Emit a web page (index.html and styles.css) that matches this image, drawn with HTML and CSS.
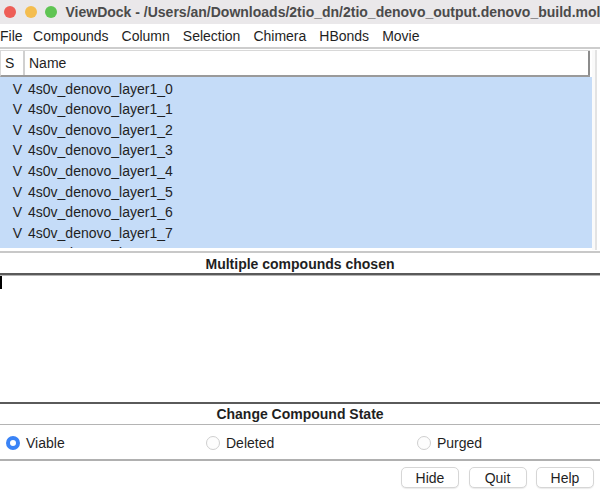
FILE: index.html
```html
<!DOCTYPE html>
<html lang="en">
<head>
  <meta charset="UTF-8" />
  <title>ViewDock</title>
  <link rel="stylesheet" href="styles.css">
</head>
<body>

<div class="titlebar">
  <span class="light red"></span>
  <span class="light yellow"></span>
  <span class="light green"></span>
  <span class="title">ViewDock - /Users/an/Downloads/2tio_dn/2tio_denovo_output.denovo_build.mol2</span>
</div>

<div class="menubar">
  <span class="menu-first">File</span>
  <span>Compounds</span>
  <span>Column</span>
  <span>Selection</span>
  <span>Chimera</span>
  <span>HBonds</span>
  <span>Movie</span>
</div>

<div class="list-pane">
  <div class="table">
    <div class="table-head">
      <div class="head-s">S</div>
      <div class="head-name">Name</div>
    </div>
    <div class="rows" id="rows"></div>
  </div>
  <div class="vscroll"></div>
</div>

<div class="section-title first">Multiple compounds chosen</div>

<div class="info-area">
  <span class="caret"></span>
</div>

<div class="section-title">Change Compound State</div>

<div class="states">
  <label class="radio"><span class="dot checked"></span>Viable</label>
  <label class="radio"><span class="dot"></span>Deleted</label>
  <label class="radio"><span class="dot"></span>Purged</label>
</div>

<div class="buttons">
  <button>Hide</button>
  <button>Quit</button>
  <button>Help</button>
</div>

<script>
  const rows = document.getElementById("rows");
  let html = "";
  for (let i = 0; i < 9; i++) {
    html += `<div class="row"><span class="cell-s">V</span><span class="cell-name">4s0v_denovo_layer1_${i}</span></div>`;
  }
  rows.innerHTML = html;
</script>

</body>
</html>
```

FILE: styles.css
```css
body {
  margin: 0;
  width: 600px;
  height: 490px;
  overflow: hidden;
  font-family: "Liberation Sans", Arial, sans-serif;
  font-size: 14px;
  color: #1f1f1f;
  background: #fff;
}

.titlebar {
  height: 24px;
  background: #eae8ea;
  display: flex;
  align-items: center;
  padding-left: 4px;
  white-space: nowrap;
  overflow: hidden;
}

.light {
  flex: none;
  width: 12px;
  height: 12px;
  border-radius: 50%;
  margin-right: 8.5px;
}

.red { background: #ee5e57; }
.yellow { background: #f4bd4f; }
.green { background: #5fc453; }

.title {
  font-weight: bold;
  font-size: 14px;
  color: #4b4b4b;
}

.menubar {
  height: 23px;
  display: flex;
  align-items: center;
  gap: 13px;
  white-space: nowrap;
}

.menu-first {
  margin-right: -2.5px;
}

.list-pane {
  display: flex;
  height: 200px;
  border-top: 2px solid #cdcdcd;
  padding-top: 1px;
}

.table {
  width: 592px;
  height: 198px;
  overflow: hidden;
}

.table-head {
  display: flex;
  height: 24px;
  border-top: 1px solid #d8d8d8;
  border-left: 1px solid #d8d8d8;
  border-bottom: 2px solid #9a9a9a;
  width: 589px;
}

.head-s {
  width: 18px;
  padding-left: 4px;
  line-height: 24px;
  border-right: 2px solid #d0d0d0;
}

.head-name {
  flex: 1;
  padding-left: 4px;
  line-height: 24px;
  border-right: 2px solid #8c8c8c;
}

.rows {
  height: 172px;
  overflow: hidden;
  background: #c5dcf8;
  padding-top: 1.5px;
  box-sizing: border-box;
}

.row {
  display: flex;
  align-items: center;
  height: 20.55px;
}

.cell-s {
  width: 22px;
  text-align: right;
}

.cell-name {
  padding-left: 6px;
}

.vscroll {
  flex: 1;
  border-left: 3px solid #fafafa;
  position: relative;
}

.vscroll::after {
  content: "";
  position: absolute;
  left: 0;
  top: 0;
  bottom: 0;
  width: 2px;
  background: #e3e3e3;
}

.section-title {
  height: 20px;
  line-height: 21px;
  text-align: center;
  font-weight: bold;
  border-top: 2px solid #5a5a5a;
  border-bottom: 1px solid #b4b4b4;
}

.section-title.first {
  line-height: 23px;
  border-top: 2px solid #c8c8c8;
  border-bottom: 2px solid #5a5a5a;
  box-shadow: 0 1px 0 #b4b4b4;
  margin-top: 1px;
}

.info-area {
  height: 126px;
}

.caret {
  display: block;
  width: 2px;
  height: 13px;
  margin-top: 1px;
  background: #000;
}

.states {
  display: grid;
  grid-template-columns: 200px 211px 1fr;
  align-items: center;
  height: 34px;
  padding-left: 6px;
  border-bottom: 2px solid #b0b0b0;
}

.radio {
  display: flex;
  align-items: center;
  gap: 6px;
  padding-top: 1px;
}

.dot {
  width: 14px;
  height: 14px;
  border-radius: 50%;
  border: 1px solid #cfcfcf;
  background: #fdfdfd;
  box-sizing: border-box;
}

.dot.checked {
  border: 4.5px solid #3a83f6;
  background: #fff;
}

.buttons {
  display: flex;
  justify-content: flex-end;
  gap: 9.5px;
  padding-top: 6px;
  padding-right: 6px;
}

.buttons button {
  width: 58px;
  height: 21px;
  font-family: "Liberation Sans", Arial, sans-serif;
  font-size: 14px;
  color: #1f1f1f;
  background: #fff;
  border: 1px solid #d6d6d6;
  border-radius: 5px;
  box-shadow: 0 1px 1px rgba(0,0,0,0.08);
  padding: 0;
}
```
